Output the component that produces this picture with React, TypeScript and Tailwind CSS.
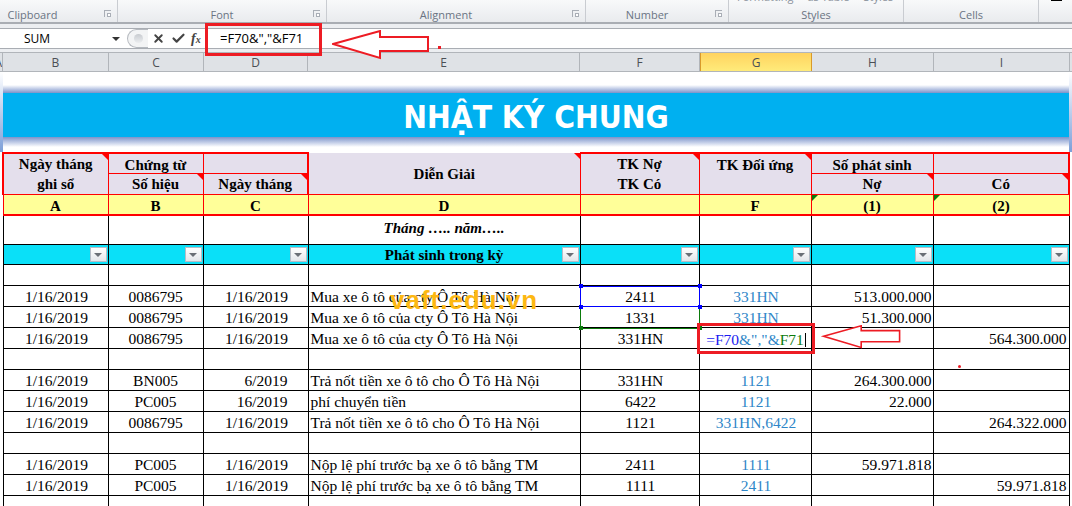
import { ReactNode } from "react"
import { Check, X } from "lucide-react"

const ribbonGroups = [
  { label: "Clipboard", width: "w-[118px]", launcher: true, offset: "pr-[52px]" },
  { label: "Font", width: "w-[209px]", launcher: true, offset: "" },
  { label: "Alignment", width: "w-[259px]", launcher: true, offset: "pr-[20px]" },
  { label: "Number", width: "w-[143px]", launcher: true, offset: "pr-[20px]" },
  { label: "Styles", width: "w-[175px]", launcher: false, offset: "" },
  { label: "Cells", width: "w-[135px]", launcher: false, offset: "" },
]

const columnHeaders = [
  { label: "B", width: "w-[106px]" },
  { label: "C", width: "w-[95px]" },
  { label: "D", width: "w-[104px]" },
  { label: "E", width: "w-[272px]" },
  { label: "F", width: "w-[120px]" },
  { label: "G", width: "w-[112px]", active: true },
  { label: "H", width: "w-[122px]" },
  { label: "I", width: "w-[136px]" },
]

type Row = {
  date?: string
  doc?: string
  day?: string
  desc?: string
  acc?: string
  other?: string
  debit?: string
  credit?: string
  partialDay?: boolean
  formula?: boolean
}

const rows: Row[] = [
  {},
  { date: "1/16/2019", doc: "0086795", day: "1/16/2019", desc: "Mua xe ô tô của cty Ô Tô Hà Nội", acc: "2411", other: "331HN", debit: "513.000.000" },
  { date: "1/16/2019", doc: "0086795", day: "1/16/2019", desc: "Mua xe ô tô của cty Ô Tô Hà Nội", acc: "1331", other: "331HN", debit: "51.300.000" },
  { date: "1/16/2019", doc: "0086795", day: "1/16/2019", desc: "Mua xe ô tô của cty Ô Tô Hà Nội", acc: "331HN", formula: true, credit: "564.300.000" },
  {},
  { date: "1/16/2019", doc: "BN005", day: "6/2019", partialDay: true, desc: "Trả nốt tiền xe ô tô cho Ô Tô Hà Nội", acc: "331HN", other: "1121", debit: "264.300.000" },
  { date: "1/16/2019", doc: "PC005", day: "16/2019", partialDay: true, desc: "phí chuyển tiền", acc: "6422", other: "1121", debit: "22.000" },
  { date: "1/16/2019", doc: "0086795", day: "1/16/2019", desc: "Trả nốt tiền xe ô tô cho Ô Tô Hà Nội", acc: "1121", other: "331HN,6422", credit: "264.322.000" },
  {},
  { date: "1/16/2019", doc: "PC005", day: "1/16/2019", desc: "Nộp lệ phí trước bạ xe ô tô bằng TM", acc: "2411", other: "1111", debit: "59.971.818" },
  { date: "1/16/2019", doc: "PC005", day: "1/16/2019", desc: "Nộp lệ phí trước bạ xe ô tô bằng TM", acc: "1111", other: "2411", credit: "59.971.818" },
  {},
]

function Launcher() {
  return (
    <span className="absolute right-[6px] bottom-[5px] h-[7px] w-[7px] border-t border-l border-[#a9aeb6]">
      <span className="absolute right-0 bottom-0 h-[4px] w-[4px] border border-[#a9aeb6] bg-white" />
    </span>
  )
}

function RedTick() {
  return <span className="absolute top-0 right-0 h-0 w-0 border-t-[6px] border-l-[6px] border-t-[#ff0000] border-l-transparent" />
}

function GreenTick() {
  return <span className="absolute top-0 left-0 h-0 w-0 border-t-[6px] border-r-[6px] border-t-[#0b7a0b] border-r-transparent" />
}

function FilterButton() {
  return (
    <span className="absolute right-px bottom-[2px] flex h-[15px] w-[17px] items-center justify-center border border-[#b5bcc6] bg-gradient-to-b from-white to-[#e3e6ea]">
      <span className="h-0 w-0 border-x-[4px] border-t-[4px] border-x-transparent border-t-[#6a6f76]" />
    </span>
  )
}

function HeadCell({ children, className = "", rowSpan }: { children?: ReactNode; className?: string; rowSpan?: number }) {
  return (
    <td rowSpan={rowSpan} className={`relative bg-[#e4dfec] p-0 text-center font-bold ${className}`}>
      {children}
    </td>
  )
}

function Arrow({ className }: { className: string }) {
  return (
    <svg className={className} viewBox="0 0 98 30" fill="none">
      <path d="M1 14 L48 1 V7 H96 V21 H48 V28 Z" stroke="#ed1c24" strokeWidth="2" fill="white" />
    </svg>
  )
}

export default function App() {
  return (
    <div className="relative h-[506px] w-[1072px] overflow-hidden bg-white font-['Liberation_Serif',serif] text-black">
      {/* ribbon */}
      <div className="flex h-[24px] border-b-2 border-[#a9adb3] bg-gradient-to-b from-[#f8f9fa] to-[#e9ebee] font-['Open_Sans',sans-serif] text-[11px] leading-[14px] text-[#6a7483]">
        {ribbonGroups.map((g) => (
          <div key={g.label} className={`relative flex shrink-0 items-end justify-center border-r border-[#c9ccd1] ${g.width} ${g.offset}`}>
            {g.label === "Styles" && (
              <div className="absolute -top-[10px] left-[8px] flex gap-[14px] whitespace-nowrap text-[#8b929c]">
                <span>Formatting</span>
                <span>as Table</span>
                <span>Styles</span>
              </div>
            )}
            {g.label}
            {g.launcher && <Launcher />}
          </div>
        ))}
        <span className="absolute top-0 left-[1051px] h-px w-[11px] bg-black" />
      </div>

      {/* formula bar */}
      <div className="flex h-[28px] items-center bg-[#eceef1] pt-[4px] pb-[3px]">
        <div className="flex h-full w-full items-stretch border-y border-[#a9adb3] bg-white">
          <div className="flex w-[122px] shrink-0 items-center justify-between pr-[1px] pl-[24px] font-['Open_Sans',sans-serif] text-[12px]">
            SUM
            <span className="mr-[1px] h-0 w-0 border-x-[4px] border-t-[4px] border-x-transparent border-t-[#333]" />
          </div>
          <div className="flex w-[88px] shrink-0 items-center pl-[5px] text-[#444]">
            <span className="flex h-[19px] w-[21px] items-center justify-center rounded-l-full border-y border-l border-[#b5b9bf] bg-[#f3f4f5]">
              <span className="h-[9px] w-[9px] rounded-full bg-gradient-to-b from-[#c8cbd0] to-[#eceef0]" />
            </span>
            <X size={13} strokeWidth={3.5} className="ml-[4px]" />
            <Check size={15} strokeWidth={3.5} className="ml-[6px]" />
            <span className="ml-[5px] font-['Liberation_Serif',serif] text-[14px] font-bold italic">
              f<span className="text-[10px]">x</span>
            </span>
          </div>
          <div className="flex-1 pl-[10px] font-['Open_Sans',sans-serif] text-[13px] leading-[19px]">=F70&amp;","&amp;F71</div>
        </div>
      </div>

      {/* column letters */}
      <div className="flex h-[20px] border-y border-[#b1b5ba] bg-[#dfe2e6] font-['Open_Sans',sans-serif] text-[12px] leading-[19px] text-[#4b4f55]">
        <div className="flex w-[3px] shrink-0 justify-end overflow-hidden border-r border-[#b1b5ba]">A</div>
        {columnHeaders.map((c) => (
          <div
            key={c.label}
            className={`shrink-0 border-r text-center ${c.width} ${c.active ? "border-x border-[#d99a2b] bg-gradient-to-b from-[#ffd35f] to-[#ffeb7a]" : "border-[#b1b5ba]"}`}
          >
            {c.label}
          </div>
        ))}
      </div>

      {/* sheet title */}
      <div className="flex h-[80px]">
        <div className="w-[3px] shrink-0 bg-gradient-to-b from-white to-[#7d9fd8]" />
        <div className="flex-1 pt-[13px]">
          <div className="h-[8px] bg-gradient-to-b from-white to-[#7d93c9]" />
          <div className="flex h-[44px] items-center justify-center bg-[#00b0f0] pt-[5px] font-['DejaVu_Sans_Condensed','DejaVu_Sans',sans-serif] text-[31.5px] leading-none font-bold text-white">
            NHẬT KÝ CHUNG
          </div>
          <div className="h-[10px] bg-gradient-to-b from-[#7d93c9] to-white" />
        </div>
        <div className="w-[3px] shrink-0 bg-gradient-to-b from-white to-[#7d9fd8]" />
      </div>

      <div className="pl-[2px]">
        <table className="w-[1066px] table-fixed border-collapse text-[15px] leading-[14px]">
          <colgroup>
            <col className="w-[105px]" />
            <col className="w-[95px]" />
            <col className="w-[105px]" />
            <col className="w-[272px]" />
            <col className="w-[119px]" />
            <col className="w-[112px]" />
            <col className="w-[122px]" />
            <col className="w-[136px]" />
          </colgroup>
          <tbody>
            <tr className="h-[20px]">
              <HeadCell rowSpan={2} className="border border-t-2 border-l-2 border-[#ff0000] leading-[20px]">
                Ngày tháng
                <br />
                ghi sổ
                <RedTick />
              </HeadCell>
              <HeadCell className="border border-t-2 border-[#ff0000] pt-[3px]">Chứng từ</HeadCell>
              <HeadCell className="border border-t-2 border-r-2 border-[#ff0000]" />
              <HeadCell rowSpan={2}>
                Diễn Giải
                <RedTick />
              </HeadCell>
              <HeadCell rowSpan={2} className="border border-t-2 border-[#ff0000] leading-[20px]">
                TK Nợ
                <br />
                TK Có
                <RedTick />
              </HeadCell>
              <HeadCell rowSpan={2} className="border border-t-2 border-[#ff0000] pt-[4px] align-top">
                TK Đối ứng
                <RedTick />
              </HeadCell>
              <HeadCell className="border border-t-2 border-[#ff0000] pt-[3px]">Số phát sinh</HeadCell>
              <HeadCell className="border border-t-2 border-r-2 border-[#ff0000]" />
            </tr>
            <tr className="h-[20px]">
              <HeadCell className="border border-[#ff0000]">
                Số hiệu
                <RedTick />
              </HeadCell>
              <HeadCell className="border border-r-2 border-[#ff0000]">
                Ngày tháng
                <RedTick />
              </HeadCell>
              <HeadCell className="border border-[#ff0000]">
                Nợ
                <RedTick />
              </HeadCell>
              <HeadCell className="border border-r-2 border-[#ff0000]">
                Có
                <RedTick />
              </HeadCell>
            </tr>
            <tr className="h-[20px] bg-[#ffff99] text-center font-bold">
              <td className="border border-b-2 border-[#ff0000] p-0 pt-[3px]">A</td>
              <td className="border border-b-2 border-[#ff0000] p-0 pt-[3px]">B</td>
              <td className="border border-b-2 border-[#ff0000] p-0 pt-[3px]">C</td>
              <td className="border border-b-2 border-[#ff0000] p-0 pt-[3px]">D</td>
              <td className="border border-b-2 border-[#ff0000] p-0" />
              <td className="border border-b-2 border-[#ff0000] p-0 pt-[3px]">F</td>
              <td className="relative border border-b-2 border-[#ff0000] p-0 pt-[3px]">
                (1)
                <GreenTick />
              </td>
              <td className="relative border border-b-2 border-[#ff0000] p-0 pt-[3px]">
                (2)
                <GreenTick />
              </td>
            </tr>
            <tr className="h-[30px]">
              <td className="border border-t-0 border-black p-0" />
              <td className="border border-t-0 border-black p-0" />
              <td className="border border-t-0 border-black p-0" />
              <td className="border border-t-0 border-black p-0 pb-[4px] text-center font-bold italic">Tháng ….. năm…..</td>
              <td className="border border-t-0 border-black p-0" />
              <td className="border border-t-0 border-black p-0" />
              <td className="border border-t-0 border-black p-0" />
              <td className="border border-t-0 border-black p-0" />
            </tr>
            <tr className="h-[20px] bg-[#0ae0f8] text-center font-bold">
              {[0, 1, 2, 3, 4, 5, 6, 7].map((i) => (
                <td key={i} className="relative border border-black p-0 pt-[1px]">
                  {i === 3 && "Phát sinh trong kỳ"}
                  <FilterButton />
                </td>
              ))}
            </tr>
            {rows.map((r, i) => (
              <tr key={i} className="h-[21px] text-[15.5px]">
                <td className="border border-black p-0 pt-[2px] pl-[2px] text-center">{r.date}</td>
                <td className="border border-black p-0 pt-[2px] text-center">{r.doc}</td>
                <td className={`border border-black p-0 pt-[2px] ${r.partialDay ? "pr-[20px] text-right" : "pl-[2px] text-center"}`}>{r.day}</td>
                <td className="border border-black py-0 pt-[2px] pr-0 pl-[2px] whitespace-nowrap">{r.desc}</td>
                <td className="border border-black p-0 pt-[2px] pl-[2px] text-center">{r.acc}</td>
                <td className="border border-black p-0 pt-[2px] pl-[2px] text-center text-[#2e86c8]">
                  {r.formula ? (
                    <span className="whitespace-nowrap">
                      <span className="text-[#1a1af0]">=F70</span>
                      <span className="text-[#2e86c8]">&amp;","&amp;</span>
                      <span className="text-[#0b7a0b]">F71</span>
                      <span className="ml-px inline-block h-[14px] w-px translate-y-[2px] bg-black" />
                    </span>
                  ) : (
                    r.other
                  )}
                </td>
                <td className="border border-black py-0 pt-[2px] pr-[1px] pl-0 text-right">{r.debit}</td>
                <td className="border border-black py-0 pt-[2px] pr-[2px] pl-0 text-right">{r.credit}</td>
              </tr>
            ))}
          </tbody>
        </table>
      </div>

      {/* annotations drawn on top of the sheet */}
      <div className="absolute top-[23px] left-[205px] h-[33px] w-[117px] border-[3px] border-[#ed1c24]" />
      <Arrow className="absolute top-[30px] left-[332px] h-[30px] w-[98px]" />
      <span className="absolute top-[46px] left-[438px] h-[3px] w-[3px] bg-[#ed1c24]" />

      <div className="absolute top-[286px] left-[580px] h-[21px] w-[120px] border border-[#0000ff]" />
      <div className="absolute top-[307px] left-[580px] h-[22px] w-[120px] border-x border-b border-[#0b7a0b]" />
      <span className="absolute top-[284px] left-[579px] h-[4px] w-[4px] bg-[#0000ff]" />
      <span className="absolute top-[284px] left-[698px] h-[4px] w-[4px] bg-[#0000ff]" />
      <span className="absolute top-[305px] left-[579px] h-[4px] w-[4px] bg-[#0000ff]" />
      <span className="absolute top-[305px] left-[698px] h-[4px] w-[4px] bg-[#0000ff]" />
      <span className="absolute top-[326px] left-[579px] h-[4px] w-[4px] bg-[#0b7a0b]" />
      <span className="absolute top-[326px] left-[698px] h-[4px] w-[4px] bg-[#0b7a0b]" />

      <div className="absolute top-[323px] left-[697px] h-[31px] w-[118px] border-[3px] border-[#ed1c24]" />
      <Arrow className="absolute top-[325px] left-[819px] h-[24px] w-[86px]" />
      <span className="absolute top-[365px] left-[958px] h-[3px] w-[3px] rounded-full bg-[#ed1c24]" />

      <div className="absolute top-[284px] left-[390px] font-['Liberation_Sans',sans-serif] text-[26px] leading-[32px] font-bold tracking-[1px] text-[#fdb813]">vaft.edu.vn</div>
    </div>
  )
}
